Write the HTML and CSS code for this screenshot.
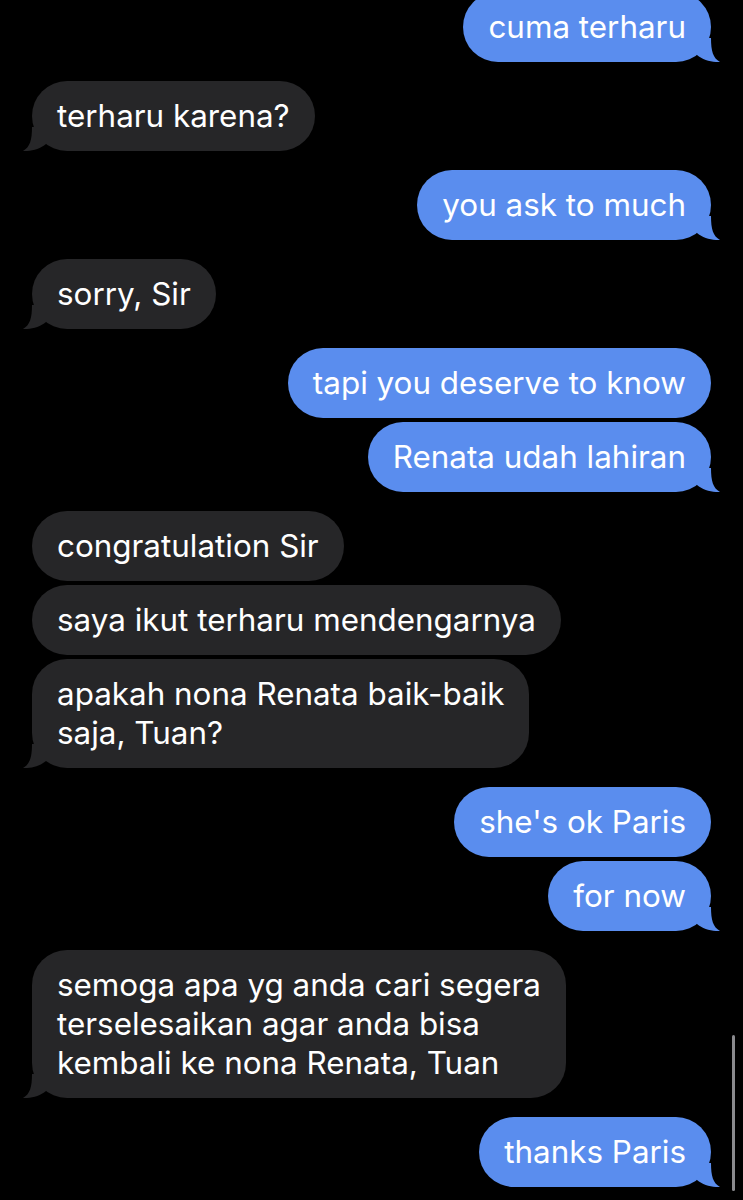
FILE: index.html
```html
<!DOCTYPE html>
<html lang="en">
<head>
  <meta charset="UTF-8">
  <meta name="viewport" content="width=device-width, initial-scale=1.0">
  <title>Messages</title>
  <link rel="stylesheet" href="styles.css">
</head>
<body>
  <div class="thread">
    <div class="group out">
      <div class="bubble tail">cuma terharu</div>
    </div>
    <div class="group in">
      <div class="bubble tail">terharu karena?</div>
    </div>
    <div class="group out">
      <div class="bubble tail">you ask to much</div>
    </div>
    <div class="group in">
      <div class="bubble tail">sorry, Sir</div>
    </div>
    <div class="group out">
      <div class="bubble">tapi you deserve to know</div>
      <div class="bubble tail">Renata udah lahiran</div>
    </div>
    <div class="group in">
      <div class="bubble">congratulation Sir</div>
      <div class="bubble">saya ikut terharu mendengarnya</div>
      <div class="bubble tail">apakah nona Renata baik-baik<br>saja, Tuan?</div>
    </div>
    <div class="group out">
      <div class="bubble">she's ok Paris</div>
      <div class="bubble tail">for now</div>
    </div>
    <div class="group in">
      <div class="bubble tail">semoga apa yg anda cari segera<br>terselesaikan agar anda bisa<br>kembali ke nona Renata, Tuan</div>
    </div>
    <div class="group out">
      <div class="bubble tail">thanks Paris</div>
    </div>
  </div>
  <div class="scrollbar"></div>
  <script>
    // add the little tail to the last bubble of each group
    document.querySelectorAll(".bubble.tail").forEach((b) => {
      b.insertAdjacentHTML("beforeend",
        '<svg class="tip" viewBox="0 0 36 24" width="36" height="24">' +
        '<path d="M27 0 C27 13 29 20 36 24 C28 24.5 19 22 13 17 L13 0 Z"/></svg>');
    });
  </script>
</body>
</html>
```

FILE: styles.css
```css
body {
  margin: 0;
  padding: 0;
  background-color: #000;
  font-family: Inter, "Noto Sans", sans-serif;
  overflow: hidden;
  height: 1200px;
}
.thread {
  display: flex;
  flex-direction: column;
  gap: 19px;
  margin-top: -8px;
  padding: 0 32px;
}
.group {
  display: flex;
  flex-direction: column;
  gap: 4px;
}
.group.out {
  align-items: flex-end;
}
.group.in {
  align-items: flex-start;
}
.bubble {
  position: relative;
  padding: 16px 25px 15px;
  border-radius: 35px;
  font-size: 31.4px;
  line-height: 39px;
  color: #fff;
}
.out .bubble {
  background-color: #5a8dee;
}
.in .bubble {
  background-color: #262628;
}
.tip {
  position: absolute;
  bottom: 0;
  display: block;
}
.out .tip {
  right: -9px;
  fill: #5a8dee;
}
.in .tip {
  left: -9px;
  transform: scaleX(-1);
  fill: #262628;
}
.scrollbar {
  position: fixed;
  right: 8px;
  top: 1035px;
  width: 3px;
  height: 156px;
  border-radius: 2px;
  background-color: #8a8a8e;
}
```
